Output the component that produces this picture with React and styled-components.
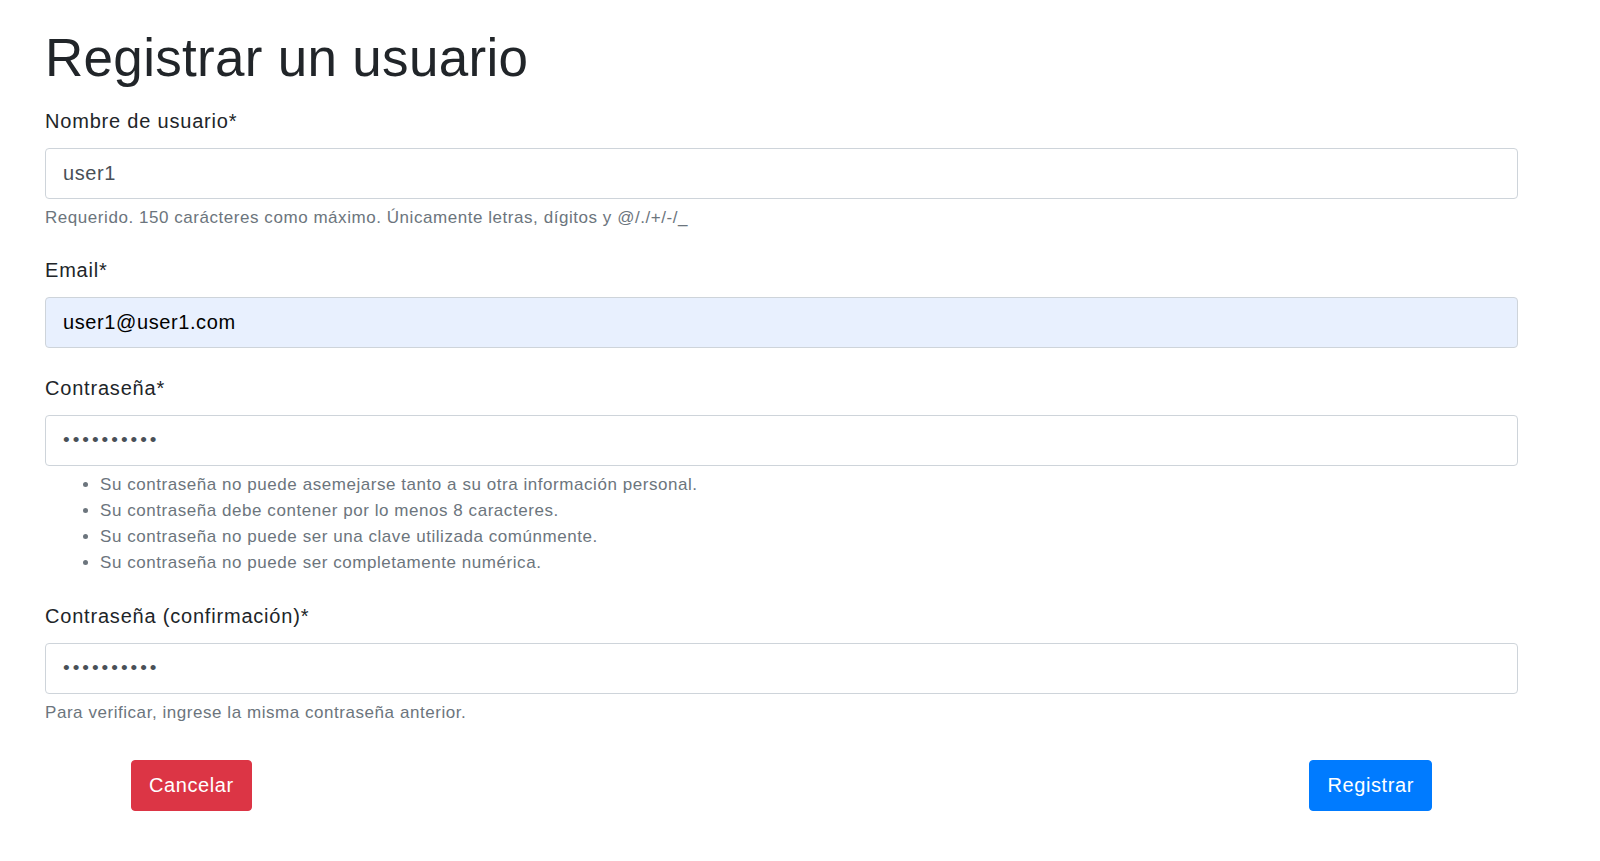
import React from "react";
import styled, { createGlobalStyle } from "styled-components";

const Global = createGlobalStyle`
  body { margin: 0; background: #fff; font-family: "Liberation Sans", Arial, sans-serif; color: #212529; }
`;
const Page = styled.div`padding: 26px 82px 0 45px;`;
const Title = styled.h1`font-size: 53px; font-weight: 500; line-height: 1.2; margin: 0 0 16px; letter-spacing: 0.3px;`;
const Group = styled.div`margin-bottom: 25px;`;
const Label = styled.label`display: block; font-size: 20px; line-height: 30px; margin-bottom: 12px; letter-spacing: 0.8px;`;
const Input = styled.input`
  display: block; box-sizing: border-box; width: 100%; height: 51px;
  padding: 0 17px; font-size: 20px; font-family: inherit; letter-spacing: 0.6px;
  color: ${p => (p.$auto ? "#000" : "#495057")};
  background: ${p => (p.$auto ? "#e8f0fe" : "#fff")};
  border: 1px solid #ced4da; border-radius: 4px; outline: none;
  &[type="password"] { letter-spacing: 3px; font-size: 19px; }
`;
const Help = styled.small`display: block; margin-top: 6px; font-size: 17px; line-height: 25px; color: #6c757d; letter-spacing: 0.55px;`;
const List = styled.ul`margin: 6px 0 0; padding-left: 55px; font-size: 17px; line-height: 26px; color: #6c757d; letter-spacing: 0.55px;`;
const Actions = styled.div`display: flex; justify-content: space-between; padding: 10px 86px 0;`;
const Button = styled.button`
  height: 51px; padding: 0 17px; font-size: 20px; font-family: inherit; color: #fff; letter-spacing: 0.6px;
  background: ${p => p.$bg}; border: 1px solid ${p => p.$bg}; border-radius: 4px;
`;

export default function App() {
  return (
    <Page>
      <Global />
      <Title>Registrar un usuario</Title>
      <Group>
        <Label>Nombre de usuario*</Label>
        <Input defaultValue="user1" />
        <Help>Requerido. 150 carácteres como máximo. Únicamente letras, dígitos y @/./+/-/_</Help>
      </Group>
      <Group>
        <Label>Email*</Label>
        <Input $auto defaultValue="user1@user1.com" />
      </Group>
      <Group>
        <Label>Contraseña*</Label>
        <Input type="password" defaultValue="1234567890" />
        <List>
          <li>Su contraseña no puede asemejarse tanto a su otra información personal.</li>
          <li>Su contraseña debe contener por lo menos 8 caracteres.</li>
          <li>Su contraseña no puede ser una clave utilizada comúnmente.</li>
          <li>Su contraseña no puede ser completamente numérica.</li>
        </List>
      </Group>
      <Group>
        <Label>Contraseña (confirmación)*</Label>
        <Input type="password" defaultValue="1234567890" />
        <Help>Para verificar, ingrese la misma contraseña anterior.</Help>
      </Group>
      <Actions>
        <Button $bg="#dc3545">Cancelar</Button>
        <Button $bg="#007bff">Registrar</Button>
      </Actions>
    </Page>
  );
}
